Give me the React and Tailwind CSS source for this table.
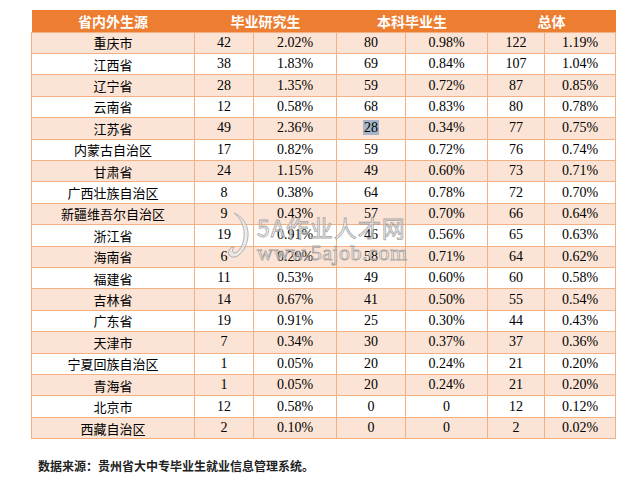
import React from "react";

const rows = [
  ["重庆市", "42", "2.02%", "80", "0.98%", "122", "1.19%"],
  ["江西省", "38", "1.83%", "69", "0.84%", "107", "1.04%"],
  ["辽宁省", "28", "1.35%", "59", "0.72%", "87", "0.85%"],
  ["云南省", "12", "0.58%", "68", "0.83%", "80", "0.78%"],
  ["江苏省", "49", "2.36%", "28", "0.34%", "77", "0.75%"],
  ["内蒙古自治区", "17", "0.82%", "59", "0.72%", "76", "0.74%"],
  ["甘肃省", "24", "1.15%", "49", "0.60%", "73", "0.71%"],
  ["广西壮族自治区", "8", "0.38%", "64", "0.78%", "72", "0.70%"],
  ["新疆维吾尔自治区", "9", "0.43%", "57", "0.70%", "66", "0.64%"],
  ["浙江省", "19", "0.91%", "46", "0.56%", "65", "0.63%"],
  ["海南省", "6", "0.29%", "58", "0.71%", "64", "0.62%"],
  ["福建省", "11", "0.53%", "49", "0.60%", "60", "0.58%"],
  ["吉林省", "14", "0.67%", "41", "0.50%", "55", "0.54%"],
  ["广东省", "19", "0.91%", "25", "0.30%", "44", "0.43%"],
  ["天津市", "7", "0.34%", "30", "0.37%", "37", "0.36%"],
  ["宁夏回族自治区", "1", "0.05%", "20", "0.24%", "21", "0.20%"],
  ["青海省", "1", "0.05%", "20", "0.24%", "21", "0.20%"],
  ["北京市", "12", "0.58%", "0", "0", "12", "0.12%"],
  ["西藏自治区", "2", "0.10%", "0", "0", "2", "0.02%"],
];

const widths = [163, 59, 83, 69, 82, 57, 71];

export default function App() {
  return (
    <div className="relative w-[639px] h-[481px] bg-white overflow-hidden">
      <div className="pt-[10px] pl-[31px]">
        <table className="border-collapse table-fixed w-[584px]">
          <colgroup>
            {widths.map((w, i) => (
              <col key={i} style={{ width: w }} />
            ))}
          </colgroup>
          <thead>
            <tr className="h-[22px] bg-[#ED7D31]">
              <th className="p-0 text-white text-[14px] font-bold text-center leading-none [font-family:'Noto_Sans_CJK_SC',sans-serif]">
                省内外生源
              </th>
              <th colSpan={2} className="p-0 text-white text-[14px] font-bold text-center leading-none [font-family:'Noto_Sans_CJK_SC',sans-serif]">
                毕业研究生
              </th>
              <th colSpan={2} className="p-0 text-white text-[14px] font-bold text-center leading-none [font-family:'Noto_Sans_CJK_SC',sans-serif]">
                本科毕业生
              </th>
              <th colSpan={2} className="p-0 text-white text-[14px] font-bold text-center leading-none [font-family:'Noto_Sans_CJK_SC',sans-serif]">
                总体
              </th>
            </tr>
          </thead>
          <tbody>
            {rows.map((r, i) => (
              <tr
                key={i}
                className={`h-[21.42px] ${i % 2 === 0 ? "bg-[#FBE4D5]" : "bg-white"}`}
              >
                {r.map((c, j) => (
                  <td
                    key={j}
                    className={`p-0 border border-[#F4B083] text-center text-black leading-none ${
                      j === 0
                        ? "text-[13px] [font-family:'Noto_Sans_CJK_SC',sans-serif]"
                        : "text-[14px] [font-family:'Liberation_Serif',serif]"
                    }`}
                  >
                    {i === 4 && j === 3 ? (
                      <span className="bg-[#A6B6C8] px-[1px]">{c}</span>
                    ) : (
                      c
                    )}
                  </td>
                ))}
              </tr>
            ))}
          </tbody>
        </table>
      </div>
      <div className="pl-[38px] pt-[18px] text-[12px] font-bold text-[#222] [font-family:'Noto_Sans_CJK_SC',sans-serif]">
        数据来源：贵州省大中专毕业生就业信息管理系统。
      </div>

      {/* watermark */}
      <div className="absolute left-[226px] top-[211px] w-[190px] h-[52px] pointer-events-none opacity-80">
        <svg className="absolute left-0 top-0" width="30" height="50" viewBox="0 0 30 50">
          <path
            d="M8 2 C22 8 26 24 18 38 C14 45 8 48 4 45 C1 42 3 36 8 36 C6 39 6 42 9 42 C15 40 19 30 18 20 C17 12 13 6 8 2 Z"
            fill="#e8e8e8"
            stroke="#a0a0a0"
            strokeWidth="1"
          />
        </svg>
        <div className="absolute left-[31px] top-[5px] text-[23px] leading-none tracking-[1px] text-[#ededed] [-webkit-text-stroke:0.8px_#959595] [font-family:'Noto_Sans_CJK_SC',sans-serif] whitespace-nowrap">
          5A作业人才网
        </div>
        <div className="absolute left-[31px] top-[31px] text-[22px] leading-none tracking-[0.5px] text-[#ededed] [-webkit-text-stroke:0.8px_#959595] [font-family:'Liberation_Serif',serif] whitespace-nowrap">
          www.5ajob.com
        </div>
      </div>
    </div>
  );
}
